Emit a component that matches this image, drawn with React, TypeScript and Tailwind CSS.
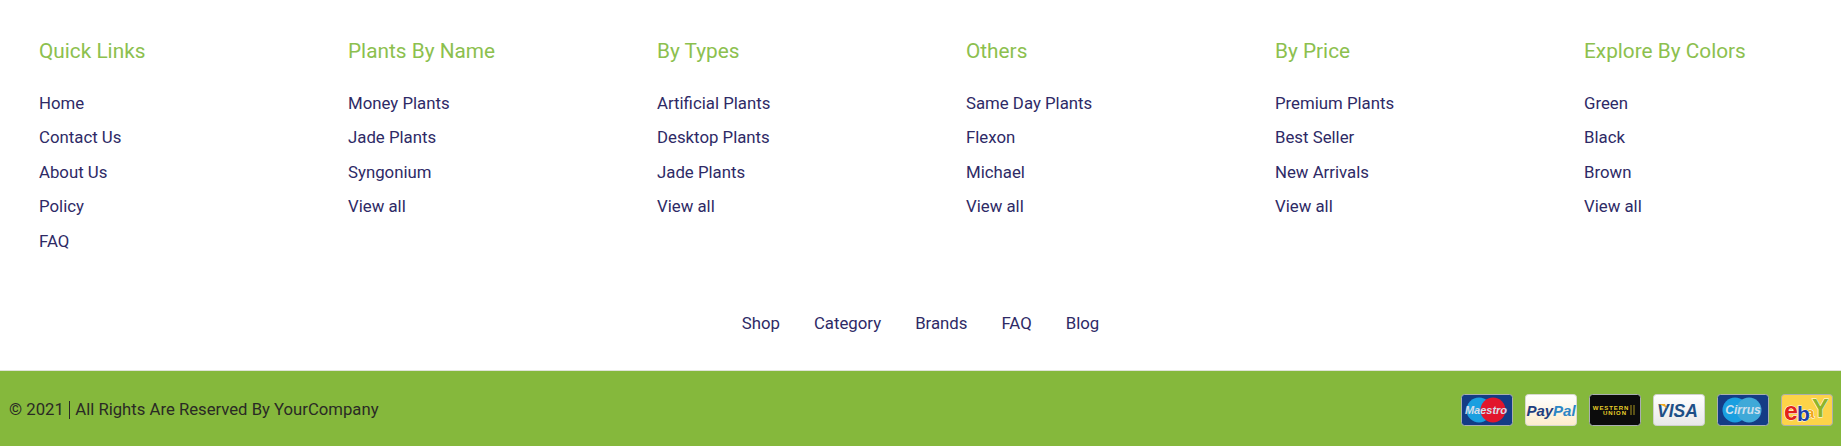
const columns = [
  { title: 'Quick Links', links: ['Home', 'Contact Us', 'About Us', 'Policy', 'FAQ'] },
  { title: 'Plants By Name', links: ['Money Plants', 'Jade Plants', 'Syngonium', 'View all'] },
  { title: 'By Types', links: ['Artificial Plants', 'Desktop Plants', 'Jade Plants', 'View all'] },
  { title: 'Others', links: ['Same Day Plants', 'Flexon', 'Michael', 'View all'] },
  { title: 'By Price', links: ['Premium Plants', 'Best Seller', 'New Arrivals', 'View all'] },
  { title: 'Explore By Colors', links: ['Green', 'Black', 'Brown', 'View all'] },
]

const bottomLinks = ['Shop', 'Category', 'Brands', 'FAQ', 'Blog']

const logoFont = 'Liberation Sans, sans-serif'

function CardFrame({ fill, children }: { fill: string; children?: React.ReactNode }) {
  return (
    <svg width="52" height="32" viewBox="0 0 52 32" className="shrink-0">
      <rect x="0.5" y="0.5" width="51" height="31" rx="3" fill={fill} stroke="#a9aeb0" />
      {children}
    </svg>
  )
}

function Maestro() {
  return (
    <CardFrame fill="#143c85">
      <circle cx="18" cy="16" r="12.5" fill="#1a9fe0" />
      <circle cx="32" cy="16" r="12.5" fill="#e2162c" />
      <text x="25" y="20" textAnchor="middle" fontSize="11" fontWeight="700" fontStyle="italic" fill="#d5deea" fontFamily={logoFont}>
        Maestro
      </text>
    </CardFrame>
  )
}

function PayPal() {
  return (
    <svg width="52" height="32" viewBox="0 0 52 32" className="shrink-0">
      <defs>
        <linearGradient id="paypalBg" x1="0" y1="0" x2="0" y2="1">
          <stop offset="0" stopColor="#ffffff" />
          <stop offset="1" stopColor="#fdeccb" />
        </linearGradient>
      </defs>
      <rect x="0.5" y="0.5" width="51" height="31" rx="3" fill="url(#paypalBg)" stroke="#d8d8d0" />
      <text x="26" y="21.5" textAnchor="middle" fontSize="15" fontWeight="700" fontStyle="italic" fontFamily={logoFont}>
        <tspan fill="#1f3f7f">Pay</tspan>
        <tspan fill="#2b86c5">Pal</tspan>
      </text>
    </svg>
  )
}

function WesternUnion() {
  return (
    <CardFrame fill="#0c0c0c">
      <text x="22" y="15.5" textAnchor="middle" fontSize="6" fontWeight="700" fill="#e9d12a" letterSpacing="0.9" fontFamily={logoFont}>
        WESTERN
      </text>
      <text x="26" y="21" textAnchor="middle" fontSize="6" fontWeight="700" fill="#e9d12a" letterSpacing="0.9" fontFamily={logoFont}>
        UNION
      </text>
      <path d="M42 11v10M45 11v10" stroke="#a8961f" strokeWidth="1" />
    </CardFrame>
  )
}

function Visa() {
  return (
    <svg width="52" height="32" viewBox="0 0 52 32" className="shrink-0">
      <defs>
        <linearGradient id="visaBg" x1="0" y1="0" x2="0" y2="1">
          <stop offset="0" stopColor="#ffffff" />
          <stop offset="1" stopColor="#e8e8e8" />
        </linearGradient>
      </defs>
      <rect x="0.5" y="0.5" width="51" height="31" rx="3" fill="url(#visaBg)" stroke="#cfd0d0" />
      <text x="24.5" y="22.7" textAnchor="middle" fontSize="17.5" fontWeight="700" fontStyle="italic" fill="#1d4f86" fontFamily={logoFont}>
        VISA
      </text>
      <path d="M5 10h7l2 4.500c-2-2-5-3.500-9-4.500z" fill="#f0a81c" />
    </svg>
  )
}

function Cirrus() {
  return (
    <CardFrame fill="#143c85">
      <circle cx="18" cy="16" r="12.5" fill="#1a9fe0" />
      <circle cx="32" cy="16" r="12.5" fill="#3fa9d8" />
      <text x="26" y="20" textAnchor="middle" fontSize="12" fontWeight="700" fontStyle="italic" fill="#cfe0ee" fontFamily={logoFont}>
        Cirrus
      </text>
    </CardFrame>
  )
}

function Ebay() {
  const halo = { stroke: '#ffffff', strokeWidth: 1, paintOrder: 'stroke' as const, fontFamily: logoFont, fontWeight: 700 }
  return (
    <CardFrame fill="#fdd349">
      <text x="3" y="26" fontSize="25" fill="#e2231a" {...halo}>e</text>
      <text x="31" y="23" fontSize="25" fill="#8fb52a" {...halo}>Y</text>
      <text x="25" y="24" fontSize="15" fill="#f2a81c" {...halo}>a</text>
      <text x="16" y="27" fontSize="21" fill="#1e3fa8" {...halo}>b</text>
    </CardFrame>
  )
}

export default function App() {
  return (
    <footer className="w-[1841px] h-[446px] flex flex-col bg-white font-['Roboto',sans-serif] overflow-hidden">
      {/* Link columns */}
      <div className="flex pl-[39px] pt-[39px]">
        {columns.map(col => (
          <div key={col.title} className="w-[309px] shrink-0">
            <h4 className="text-[20.8px] leading-[24px] font-normal text-[#8cc04e] whitespace-nowrap">{col.title}</h4>
            <ul className="mt-[28px] flex flex-col">
              {col.links.map(link => (
                <li key={link} className="h-[34.4px] text-[16.8px] leading-[24px] text-[#2e2a66] whitespace-nowrap">
                  {link}
                </li>
              ))}
            </ul>
          </div>
        ))}
      </div>

      {/* Bottom nav */}
      <nav className="mt-[48px] flex justify-center gap-[34px] text-[16.8px] leading-[24px] text-[#2e2a66]">
        {bottomLinks.map(link => (
          <span key={link}>{link}</span>
        ))}
      </nav>

      {/* Copyright bar */}
      <div className="mt-auto h-[76px] pt-[3px] bg-[#85b83c] border-t border-[#dfe3d8] flex items-center justify-between pl-[9px] pr-[8px]">
        <p className="flex items-center text-[16.7px] text-[#2a2a25] whitespace-nowrap">
          © 2021
          <span className="inline-block w-[1.5px] h-[18px] mx-[5px] bg-[#2a2a25]" />
          All Rights Are Reserved By YourCompany
        </p>
        <div className="flex items-center gap-[12px]">
          <Maestro />
          <PayPal />
          <WesternUnion />
          <Visa />
          <Cirrus />
          <Ebay />
        </div>
      </div>
    </footer>
  )
}
